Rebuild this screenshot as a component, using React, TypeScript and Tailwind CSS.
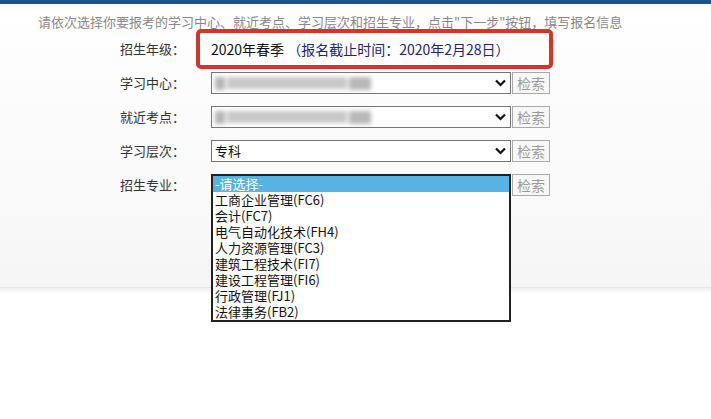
import React from "react";

const font = { fontFamily: '"Noto Sans CJK SC", "Noto Sans", sans-serif' };

const majors = [
  "工商企业管理(FC6)",
  "会计(FC7)",
  "电气自动化技术(FH4)",
  "人力资源管理(FC3)",
  "建筑工程技术(FI7)",
  "建设工程管理(FI6)",
  "行政管理(FJ1)",
  "法律事务(FB2)",
];

function Chevron() {
  return (
    <svg width="11" height="8" viewBox="0 0 11 8" className="shrink-0">
      <polyline points="1,1.5 5.5,6 10,1.5" fill="none" stroke="#111" strokeWidth="2.2" />
    </svg>
  );
}

function Select({ children }: { children?: React.ReactNode }) {
  return (
    <div className="flex items-center w-[300px] h-[22px] border border-[#767676] bg-white pl-[3px] pr-[4px]">
      <div className="flex-1 flex items-center min-w-0 h-full">{children}</div>
      <Chevron />
    </div>
  );
}

function SearchBtn() {
  return (
    <div className="ml-[1px] w-[38px] h-[22px] border border-[#a9a9a9] bg-[#f7f7f7] text-[#9a9a9a] text-[14px] flex items-center justify-center">
      检索
    </div>
  );
}

function Blurred() {
  return (
    <div className="flex items-center gap-[2px] blur-[2px]">
      <div className="w-[10px] h-[13px] bg-[#b5b5b5]" />
      <div className="w-[120px] h-[12px] bg-[#c8c8c8]" />
      <div className="w-[22px] h-[13px] bg-[#b8b8b8]" />
    </div>
  );
}

function Row({ label, children }: { label: string; children?: React.ReactNode }) {
  return (
    <div className="relative flex items-center h-[22px]">
      <div className="w-[91px] text-[13px] text-[#333]">{label}</div>
      {children}
    </div>
  );
}

export default function App() {
  return (
    <div className="w-[711px] h-[419px] bg-white overflow-hidden" style={font}>
      <div className="h-[4px] bg-[#1f4f8c]" />
      <div className="relative h-[284px] bg-gradient-to-b from-white to-[#f6f6f6] border-b border-[#e6e6e6]">
        <div className="pl-[38px] pt-[10px] text-[13px] leading-[16px] text-[#888] whitespace-nowrap">
          请依次选择你要报考的学习中心、就近考点、学习层次和招生专业，点击"下一步"按钮，填写报名信息
        </div>

        <div className="pl-[120px] pt-[8px] flex flex-col gap-[12px]">
          <Row label="招生年级：">
            <div className="text-[14px] whitespace-nowrap text-[#111]">
              2020年春季
              <span className="text-[#23237a]"> （报名截止时间：2020年2月28日）</span>
            </div>
            {/* highlight annotation */}
            <div className="absolute left-[76px] top-[-9px] w-[357px] h-[40px] border-[4px] border-[#d8322b] rounded-[5px]" />
          </Row>
          <Row label="学习中心：">
            <Select>
              <Blurred />
            </Select>
            <SearchBtn />
          </Row>
          <Row label="就近考点：">
            <Select>
              <Blurred />
            </Select>
            <SearchBtn />
          </Row>
          <Row label="学习层次：">
            <Select>
              <span className="text-[13px] text-[#111]">专科</span>
            </Select>
            <SearchBtn />
          </Row>
          <Row label="招生专业：">
            <div className="w-[300px]" />
            <SearchBtn />
            {/* open listbox */}
            <div className="absolute left-[91px] top-0 z-10 w-[300px] border-2 border-[#222] bg-white text-[13px] leading-[16px] text-[#111]">
              <div className="bg-[#56b3e3] text-white pl-[2px]">-请选择-</div>
              {majors.map((m) => (
                <div key={m} className="pl-[2px]">
                  {m}
                </div>
              ))}
            </div>
          </Row>
        </div>
      </div>
      <div className="h-[6px] bg-gradient-to-b from-[#f0f0f0] to-white" />
    </div>
  );
}
